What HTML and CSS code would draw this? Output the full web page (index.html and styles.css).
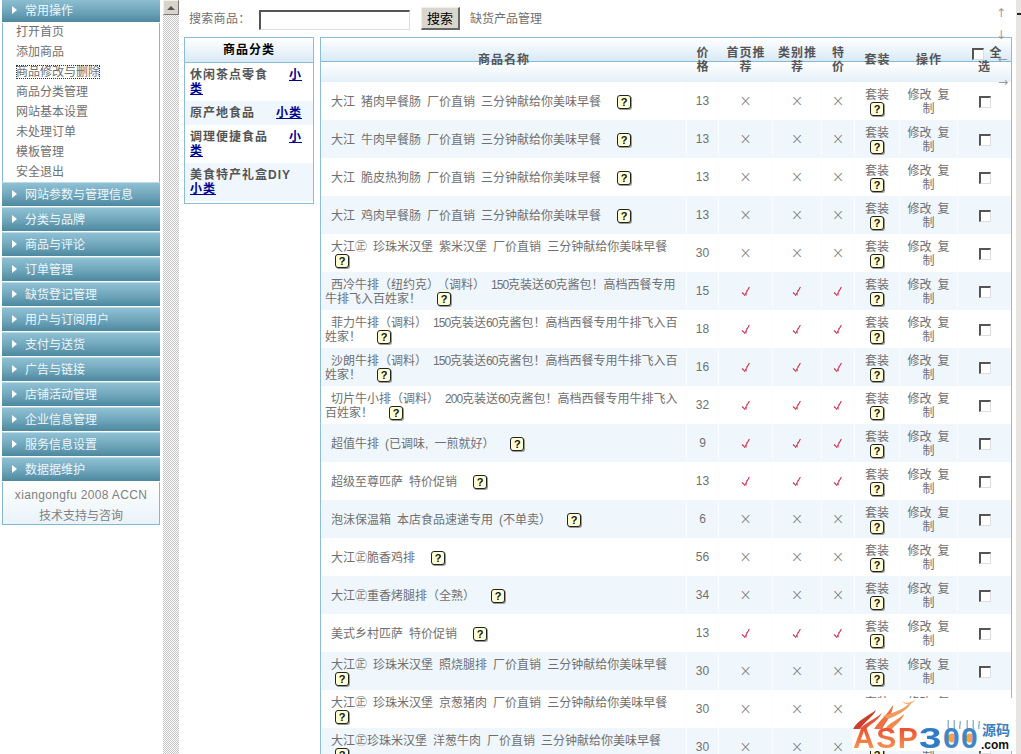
FILE: index.html
```html
<!DOCTYPE html>
<html lang="zh-CN">
<head>
<meta charset="utf-8">
<title>商品修改与删除</title>
<link rel="stylesheet" href="styles.css">
</head>
<body>
<svg class="defs" width="0" height="0" aria-hidden="true">
  <symbol id="tick" viewBox="0 0 10 11"><path d="M1 6.5 L3.2 8.6 M3.4 9.8 L8.4 1" fill="none" stroke="#c8304c" stroke-width="1.1"/><path d="M5.2 9.6 L5.8 4" stroke="#dc6a80" stroke-width="1" fill="none"/></symbol>
</svg>
<div class="app">
  <aside class="sidebar">
    <div class="bar">常用操作</div>
    <ul class="menu">
      <li>打开首页</li>
      <li>添加商品</li>
      <li><span class="focus">商品修改与删除</span></li>
      <li>商品分类管理</li>
      <li>网站基本设置</li>
      <li>未处理订单</li>
      <li>模板管理</li>
      <li>安全退出</li>
    </ul>
    <div class="bar">网站参数与管理信息</div>
    <div class="bar">分类与品牌</div>
    <div class="bar">商品与评论</div>
    <div class="bar">订单管理</div>
    <div class="bar">缺货登记管理</div>
    <div class="bar">用户与订阅用户</div>
    <div class="bar">支付与送货</div>
    <div class="bar">广告与链接</div>
    <div class="bar">店铺活动管理</div>
    <div class="bar">企业信息管理</div>
    <div class="bar">服务信息设置</div>
    <div class="bar">数据据维护</div>
    <div class="side-foot">
      <div class="foot-en">xiangongfu 2008 ACCN</div>
      <div class="foot-cn">技术支持与咨询</div>
    </div>
  </aside>
  <div class="strip"><div class="strip-btn"><span class="up"></span></div></div>
  <main class="main">
    <form class="search">
      <label class="search-label">搜索商品：</label>
      <input class="search-input" type="text">
      <button class="search-btn" type="button">搜索</button>
      <a class="search-link">缺货产品管理</a>
    </form>
    <div class="panels">
      <section class="cats">
        <h2 class="cats-head">商品分类</h2>
        <div class="cat">休闲茶点零食<a class="cat-link">小类</a></div>
        <div class="cat alt">原产地食品<a class="cat-link">小类</a></div>
        <div class="cat">调理便捷食品<a class="cat-link">小类</a></div>
        <div class="cat alt">美食特产礼盒DIY<br><a class="cat-link flush">小类</a></div>
      </section>
      <table class="goods">
        <colgroup>
          <col class="c-name"><col class="c-price"><col class="c-home"><col class="c-type"><col class="c-sale"><col class="c-set"><col class="c-op"><col class="c-all">
        </colgroup>
        <thead>
          <tr>
            <th>商品名称</th><th>价格</th><th>首页推荐</th><th>类别推荐</th><th>特价</th><th>套装</th><th>操作</th>
            <th class="th-all"><input class="cb head-cb" type="checkbox">全选</th>
          </tr>
        </thead>
        <tbody>
          <tr><td class="name">大江 猪肉早餐肠 厂价直销 三分钟献给你美味早餐 <i class="q">?</i></td><td>13</td><td class="x">×</td><td class="x">×</td><td class="x">×</td><td class="set">套装 <i class="q">?</i></td><td class="op">修改 复制</td><td><input class="cb" type="checkbox"></td></tr>
          <tr><td class="name">大江 牛肉早餐肠 厂价直销 三分钟献给你美味早餐 <i class="q">?</i></td><td>13</td><td class="x">×</td><td class="x">×</td><td class="x">×</td><td class="set">套装 <i class="q">?</i></td><td class="op">修改 复制</td><td><input class="cb" type="checkbox"></td></tr>
          <tr><td class="name">大江 脆皮热狗肠 厂价直销 三分钟献给你美味早餐 <i class="q">?</i></td><td>13</td><td class="x">×</td><td class="x">×</td><td class="x">×</td><td class="set">套装 <i class="q">?</i></td><td class="op">修改 复制</td><td><input class="cb" type="checkbox"></td></tr>
          <tr><td class="name">大江 鸡肉早餐肠 厂价直销 三分钟献给你美味早餐 <i class="q">?</i></td><td>13</td><td class="x">×</td><td class="x">×</td><td class="x">×</td><td class="set">套装 <i class="q">?</i></td><td class="op">修改 复制</td><td><input class="cb" type="checkbox"></td></tr>
          <tr><td class="name">大江㊣ 珍珠米汉堡 紫米汉堡 厂价直销 三分钟献给你美味早餐 <i class="q">?</i></td><td>30</td><td class="x">×</td><td class="x">×</td><td class="x">×</td><td class="set">套装 <i class="q">?</i></td><td class="op">修改 复制</td><td><input class="cb" type="checkbox"></td></tr>
          <tr><td class="name">西冷牛排（纽约克）<span class="paren">（调料）</span> <span class="num">150</span>克装送<span class="num">60</span>克酱包！高档西餐专用牛排飞入百姓家！ <i class="q">?</i></td><td>15</td><td><svg class="tick"><use href="#tick"/></svg></td><td><svg class="tick"><use href="#tick"/></svg></td><td><svg class="tick"><use href="#tick"/></svg></td><td class="set">套装 <i class="q">?</i></td><td class="op">修改 复制</td><td><input class="cb" type="checkbox"></td></tr>
          <tr><td class="name">菲力牛排（调料） <span class="num">150</span>克装送<span class="num">60</span>克酱包！高档西餐专用牛排飞入百姓家！ <i class="q">?</i></td><td>18</td><td><svg class="tick"><use href="#tick"/></svg></td><td><svg class="tick"><use href="#tick"/></svg></td><td><svg class="tick"><use href="#tick"/></svg></td><td class="set">套装 <i class="q">?</i></td><td class="op">修改 复制</td><td><input class="cb" type="checkbox"></td></tr>
          <tr><td class="name">沙朗牛排（调料） <span class="num">150</span>克装送<span class="num">60</span>克酱包！高档西餐专用牛排飞入百姓家！ <i class="q">?</i></td><td>16</td><td><svg class="tick"><use href="#tick"/></svg></td><td><svg class="tick"><use href="#tick"/></svg></td><td><svg class="tick"><use href="#tick"/></svg></td><td class="set">套装 <i class="q">?</i></td><td class="op">修改 复制</td><td><input class="cb" type="checkbox"></td></tr>
          <tr><td class="name">切片牛小排（调料） <span class="num">200</span>克装送<span class="num">60</span>克酱包！高档西餐专用牛排飞入百姓家！ <i class="q">?</i></td><td>32</td><td><svg class="tick"><use href="#tick"/></svg></td><td><svg class="tick"><use href="#tick"/></svg></td><td><svg class="tick"><use href="#tick"/></svg></td><td class="set">套装 <i class="q">?</i></td><td class="op">修改 复制</td><td><input class="cb" type="checkbox"></td></tr>
          <tr><td class="name">超值牛排 (已调味, 一煎就好） <i class="q">?</i></td><td>9</td><td><svg class="tick"><use href="#tick"/></svg></td><td><svg class="tick"><use href="#tick"/></svg></td><td><svg class="tick"><use href="#tick"/></svg></td><td class="set">套装 <i class="q">?</i></td><td class="op">修改 复制</td><td><input class="cb" type="checkbox"></td></tr>
          <tr><td class="name">超级至尊匹萨 特价促销 <i class="q">?</i></td><td>13</td><td><svg class="tick"><use href="#tick"/></svg></td><td><svg class="tick"><use href="#tick"/></svg></td><td><svg class="tick"><use href="#tick"/></svg></td><td class="set">套装 <i class="q">?</i></td><td class="op">修改 复制</td><td><input class="cb" type="checkbox"></td></tr>
          <tr><td class="name">泡沫保温箱 本店食品速递专用 (不单卖） <i class="q">?</i></td><td>6</td><td class="x">×</td><td class="x">×</td><td class="x">×</td><td class="set">套装 <i class="q">?</i></td><td class="op">修改 复制</td><td><input class="cb" type="checkbox"></td></tr>
          <tr><td class="name">大江㊣脆香鸡排 <i class="q">?</i></td><td>56</td><td class="x">×</td><td class="x">×</td><td class="x">×</td><td class="set">套装 <i class="q">?</i></td><td class="op">修改 复制</td><td><input class="cb" type="checkbox"></td></tr>
          <tr><td class="name">大江㊣重香烤腿排（全熟） <i class="q">?</i></td><td>34</td><td class="x">×</td><td class="x">×</td><td class="x">×</td><td class="set">套装 <i class="q">?</i></td><td class="op">修改 复制</td><td><input class="cb" type="checkbox"></td></tr>
          <tr><td class="name">美式乡村匹萨 特价促销 <i class="q">?</i></td><td>13</td><td><svg class="tick"><use href="#tick"/></svg></td><td><svg class="tick"><use href="#tick"/></svg></td><td><svg class="tick"><use href="#tick"/></svg></td><td class="set">套装 <i class="q">?</i></td><td class="op">修改 复制</td><td><input class="cb" type="checkbox"></td></tr>
          <tr><td class="name">大江㊣ 珍珠米汉堡 照烧腿排 厂价直销 三分钟献给你美味早餐 <i class="q">?</i></td><td>30</td><td class="x">×</td><td class="x">×</td><td class="x">×</td><td class="set">套装 <i class="q">?</i></td><td class="op">修改 复制</td><td><input class="cb" type="checkbox"></td></tr>
          <tr><td class="name">大江㊣ 珍珠米汉堡 京葱猪肉 厂价直销 三分钟献给你美味早餐 <i class="q">?</i></td><td>30</td><td class="x">×</td><td class="x">×</td><td class="x">×</td><td class="set">套装 <i class="q">?</i></td><td class="op">修改 复制</td><td><input class="cb" type="checkbox"></td></tr>
          <tr><td class="name">大江㊣珍珠米汉堡 洋葱牛肉 厂价直销 三分钟献给你美味早餐 <i class="q">?</i></td><td>30</td><td class="x">×</td><td class="x">×</td><td class="x">×</td><td class="set">套装 <i class="q">?</i></td><td class="op">修改 复制</td><td><input class="cb" type="checkbox"></td></tr>
        </tbody>
      </table>
    </div>
    <div class="guides">
      <span class="g-up">↑</span><span class="g-down">↓</span><span class="g-left">←</span><span class="g-right">→</span>
    </div>
    <div class="mark">
      <svg class="flame" viewBox="0 0 110 40" aria-hidden="true">
        <path d="M1 31 C6 22 16 18 24 12 C22 18 12 24 8 31 Z" fill="#c9402e"/>
        <path d="M8 31 C14 24 22 22 30 15 C26 23 18 26 14 31 Z" fill="#e0583a"/>
        <path d="M22 31 C28 22 34 18 41 7 C41 16 34 24 30 31 Z" fill="#ec7040"/>
        <path d="M33 31 C38 24 46 22 52 16 C50 23 44 26 40 31 Z" fill="#f08a4e"/>
        <path d="M31 18 C40 15 52 12 60 3 C57 12 44 18 36 21 Z" fill="#f09a5e"/>
        <path d="M50 3 C54 6 60 5 64 1 C60 7 54 8 50 3 Z" fill="#f4b070"/>
      </svg>
      <svg class="curls" viewBox="0 0 36 10" aria-hidden="true">
        <path d="M4 9 C2 6 4 3 3 0 M10 9 C8 6 10 3 9 0 M15 9 C14 6 16 3 15 1 M23 9 C21 6 23 3 22 0 M29 9 C27 6 29 3 28 0 M34 9 C33 6 35 3 34 1" fill="none" stroke="#7aa4c0" stroke-width="1.2"/>
      </svg>
      <span class="mark-main"><span class="m-asp">ASP</span><span class="m-num">3</span><span class="m-zero">0</span><span class="m-zero">0</span></span>
      <span class="mark-cn">源码</span>
      <span class="mark-com">.com</span>
    </div>
  </main>
  <div class="edge"><span class="edge-tick"></span></div>
</div>
</body>
</html>
```

FILE: styles.css
```css
* { box-sizing: border-box; }
html, body { margin: 0; height: 100%; overflow: hidden; background: #fff; }
body {
  font: 12px/14px "Liberation Sans", "Noto Sans CJK SC", sans-serif;
  color: #707070;
}
.defs { position: absolute; }
.app { display: flex; height: 754px; overflow: hidden; }

/* sidebar */
.sidebar { flex: 0 0 158px; margin: -2px 0 0 2px; }
.bar {
  position: relative;
  height: 25px;
  padding-left: 23px;
  line-height: 24px;
  color: #eef6fa;
  background: linear-gradient(#8fc0d4, #6ea5ba 55%, #4d889f);
  border-top: 1px solid #b9dbe8;
  border-bottom: 1px solid #fff;
}
.bar::before {
  content: "";
  position: absolute;
  left: 10px;
  top: 7px;
  border-left: 5px solid #fff;
  border-top: 4px solid transparent;
  border-bottom: 4px solid transparent;
}
.menu {
  list-style: none;
  margin: -1px 0 0;
  padding: 0 0 0 13px;
  border-left: 1px solid #85b8d0;
  border-right: 1px solid #85b8d0;
  background: #fff;
}
.menu li { height: 20px; line-height: 20px; }
.focus { outline: 1px dotted #333; outline-offset: -1px; }
.side-foot {
  height: 44px;
  margin-top: -1px;
  padding-top: 3px;
  border: 1px solid #85b8d0;
  background: linear-gradient(#fff, #e9f3fa);
  text-align: center;
  line-height: 20px;
  color: #808080;
}
.foot-en { letter-spacing: 0.35px; }
.foot-cn { margin-top: 1px; }

/* dotted strip */
.strip {
  flex: 0 0 16px;
  margin-left: 3px;
  background: repeating-conic-gradient(#c4c4c4 0 25%, #fff 0 50%) 0 0 / 2px 2px;
}
.strip-btn {
  display: flex;
  align-items: center;
  justify-content: center;
  height: 15px;
  background: #d8d4cc;
  border: 1px solid;
  border-color: #f4f2ee #777 #777 #f4f2ee;
}
.up {
  border-bottom: 4px solid #555;
  border-left: 4px solid transparent;
  border-right: 4px solid transparent;
}

/* main */
.main { position: relative; flex: 1; padding: 7px 4px 0 5px; min-width: 0; }
.search { display: flex; align-items: center; height: 23px; margin-bottom: 7px; }
.search-label { margin-left: 5px; width: 70px; letter-spacing: 0.3px; }
.search-input {
  width: 151px;
  height: 20px;
  margin: 3px 0 0;
  padding: 0;
  border: 1px solid;
  border-width: 2px 1px 1px 2px;
  border-color: #555 #ddd #ddd #555;
  background: #fff;
}
.search-btn {
  width: 39px;
  height: 23px;
  margin: 0 0 0 11px;
  padding: 0;
  font: 13px/1 "Liberation Sans", "Noto Sans CJK SC", sans-serif;
  color: #000;
  background: #dad6ce;
  border: 1px solid;
  border-width: 1px 2px 2px 1px;
  border-color: #f0eeea #666 #666 #f0eeea;
}
.search-link { margin-left: 10px; }

.panels { display: flex; align-items: flex-start; gap: 6px; }

/* categories */
.cats {
  flex: 0 0 130px;
  border: 1px solid #8bbdd8;
  padding-bottom: 2px;
  letter-spacing: 1px;
}
.cats-head {
  margin: 0;
  height: 25px;
  font-size: 12px;
  line-height: 25px;
  font-weight: 700;
  color: #000;
  text-align: center;
  background: linear-gradient(#fff, #d9eaf6);
  border-bottom: 1px solid #8bbdd8;
}
.cat { padding: 5px; font-weight: 700; color: #555; }
.cat.alt { background: #eff7fd; }
.cat-link { margin-left: 21px; color: #00008f; text-decoration: underline; }
.cat-link.flush { margin-left: 0; }

/* goods table */
.goods {
  flex: 0 0 692px;
  width: 692px;
  table-layout: fixed;
  border-collapse: separate;
  border-spacing: 0;
  border: 1px solid #8bbdd8;
  border-bottom: 0;
}
.c-name { width: 366px; }
.c-price { width: 32px; }
.c-home { width: 54px; }
.c-type { width: 49px; }
.c-sale { width: 33px; }
.c-set { width: 45px; }
.c-op { width: 58px; }
.c-all { width: 53px; }
.goods th {
  height: 44px;
  padding: 0 4px;
  font-weight: 700;
  letter-spacing: 1px;
  color: #555;
  text-align: center;
  background: linear-gradient(#fff, #d9eaf6 23px, #86b9d8 23px, #86b9d8 24px, #fff 24px, #e4f0f9);
}
.goods .th-all { padding: 0 8px; }
.goods td {
  height: 38px;
  padding: 0 4px;
  text-align: center;
  word-spacing: 2.7px;
  border-right: 1px solid #fafdff;
}
.goods tbody tr:nth-child(even) td { background: #eff7fd; }
.goods .name { text-align: left; text-indent: 6px; }
.goods .name, .goods .set, .goods .op { padding-top: 2px; }
.goods td:last-child { border-right: 0; }
.num { letter-spacing: -1px; }
.paren { margin-left: 4px; }
.goods .x { font: 200 15px/14px "DejaVu Sans", sans-serif; color: #777; }
.q {
  display: inline-block;
  width: 14px;
  height: 14px;
  margin-left: 10px;
  border: 1px solid #222;
  border-radius: 3px;
  background: #ffffd6;
  color: #111;
  font: 700 11px/12px "Liberation Sans", sans-serif;
  text-align: center;
  text-indent: 0;
  vertical-align: top;
  box-shadow: 1px 1px 0 #999;
}
.set .q { margin-left: 0; }
.tick { display: inline-block; width: 10px; height: 11px; vertical-align: middle; }
.cb {
  appearance: none;
  width: 12px;
  height: 12px;
  margin: 0;
  vertical-align: middle;
  border: 1px solid;
  border-width: 2px 1px 1px 2px;
  border-color: #555 #ddd #ddd #555;
  background: #fff;
}
.head-cb { margin: 0 5px 0 6px; }

/* overlaid guide arrows */
.guides { position: absolute; inset: 0; color: #999; pointer-events: none; font: 12px/12px "DejaVu Sans", sans-serif; }
.guides span { position: absolute; }
.g-up { right: 10px; top: 7px; }
.g-down { right: 10px; top: 29px; }
.g-left { right: 8px; top: 53px; }
.g-right { right: 8px; top: 76px; }

/* watermark */
.mark {
  position: absolute;
  left: 673px;
  top: 698px;
  width: 164px;
  height: 53px;
  background: #fff;
}
.flame { position: absolute; left: 0; top: 0; width: 110px; height: 40px; }
.curls { position: absolute; left: 93px; top: 22px; width: 36px; height: 10px; }
.mark-main {
  position: absolute;
  left: 1px;
  top: 28px;
  display: flex;
  font: 700 30px/24px "Liberation Sans", sans-serif;
}
.m-asp {
  width: 66px;
  letter-spacing: 1.5px;
  color: transparent;
  background: linear-gradient(#e8482c, #f59a54);
  background-clip: text;
  -webkit-background-clip: text;
}
.m-num {
  width: 24px;
  color: #2f7cc4;
  transform: scaleX(1.35);
  transform-origin: left center;
}
.m-zero {
  width: 18px;
  color: #3f86c6;
  background: radial-gradient(circle at 50% 50%, #f6a050 0 4px, transparent 5px);
}
.mark-cn {
  position: absolute;
  left: 130px;
  top: 23px;
  font: 700 14px/16px "Noto Sans CJK SC", sans-serif;
  color: #3a80c0;
}
.mark-com {
  position: absolute;
  left: 129px;
  top: 41px;
  font: 700 12px/12px "Liberation Sans", sans-serif;
  color: #111;
}

/* right edge */
.edge { position: relative; flex: 0 0 5px; background: #e8e4e2; }
.edge-tick { position: absolute; left: 1px; right: 0; top: 13px; height: 2px; background: #222; }
```
